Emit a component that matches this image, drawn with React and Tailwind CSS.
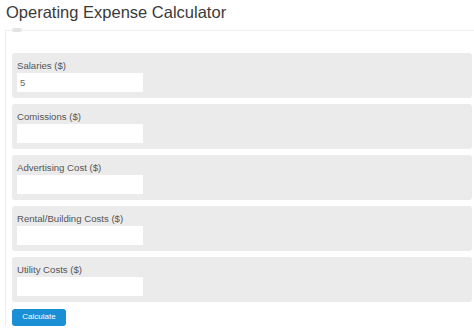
const fields = [
  { label: "Salaries ($)", value: "5" },
  { label: "Comissions ($)", value: "" },
  { label: "Advertising Cost ($)", value: "" },
  { label: "Rental/Building Costs ($)", value: "" },
  { label: "Utility Costs ($)", value: "" },
];

const App = () => {
  return (
    <div className="w-[474px] h-[331px] overflow-hidden bg-white font-['Liberation_Sans',Arial,sans-serif]">
      <h1 className="pl-[6px] pt-[2px] text-[16.5px] leading-[20px] text-[#3a3a3a]">
        Operating Expense Calculator
      </h1>
      <div className="relative mt-[8px] ml-[5px] border-l border-t border-[#efefef] pl-[6px] pt-[22px] pr-[2px]">
        <span className="absolute left-[6px] top-[-3px] h-[4px] w-[10px] rounded-full bg-[#e4e4e4]" />
        <div className="flex flex-col gap-[6px]">
          {fields.map((f) => (
            <div
              key={f.label}
              className="h-[45px] rounded-[3px] bg-[#ebebeb] pl-[5px] pt-[7px]"
            >
              <label className="block text-[9.6px] leading-[12px] text-[#555]">
                {f.label}
              </label>
              <input
                type="text"
                defaultValue={f.value}
                className="mt-[1px] block h-[19px] w-[126px] bg-white px-[3px] text-[9.5px] text-[#666] outline-none"
              />
            </div>
          ))}
        </div>
        <button className="mt-[6px] h-[17px] w-[54px] rounded-[3px] bg-[#1a8fd6] text-[8px] text-white">
          Calculate
        </button>
      </div>
    </div>
  );
};

export default App;
